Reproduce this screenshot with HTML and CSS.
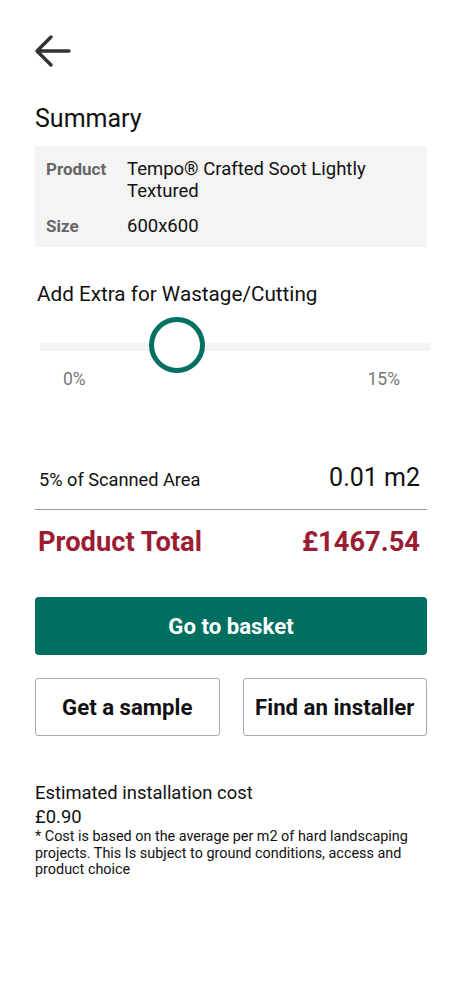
FILE: index.html
```html
<!DOCTYPE html>
<html lang="en">
<head>
    <meta charset="UTF-8">
    <meta name="viewport" content="width=device-width, initial-scale=1.0">
    <title>Summary</title>
    <link rel="stylesheet" href="styles.css">
</head>
<body>
    <div class="page">
        <button class="back" aria-label="Back">
            <svg width="38" height="36" viewBox="0 0 38 36">
                <path d="M35 17H3M17 3L3 17L17 31" fill="none" stroke="#333" stroke-width="3.4" stroke-linecap="round" stroke-linejoin="round"/>
            </svg>
        </button>

        <h1>Summary</h1>
        <div class="summary">
            <div class="row">
                <span class="label">Product</span>
                <span class="value">Tempo® Crafted Soot Lightly Textured</span>
            </div>
            <div class="row">
                <span class="label">Size</span>
                <span class="value">600x600</span>
            </div>
        </div>

        <h2>Add Extra for Wastage/Cutting</h2>
        <div class="slider">
            <div class="track"></div>
            <div class="thumb" style="left: 35%"></div>
        </div>
        <div class="ticks">
            <span>0%</span>
            <span>15%</span>
        </div>

        <div class="area">
            <span>5% of Scanned Area</span>
            <span class="area-value">0.01 m2</span>
        </div>
        <div class="total">
            <span>Product Total</span>
            <span>£1467.54</span>
        </div>

        <button class="primary">Go to basket</button>
        <div class="actions">
            <button class="secondary">Get a sample</button>
            <button class="secondary">Find an installer</button>
        </div>

        <div class="install">
            <p class="install-title">Estimated installation cost</p>
            <p class="install-price">£0.90</p>
            <p class="note">* Cost is based on the average per m2 of hard landscaping projects. This Is subject to ground conditions, access and product choice</p>
        </div>
    </div>
</body>
</html>
```

FILE: styles.css
```css
body {
    margin: 0;
    font-family: Roboto, "Noto Sans", sans-serif;
    color: #111;
    background: #fff;
}
.page {
    padding: 34px 35px 40px 35px;
}
.back {
    display: block;
    background: none;
    border: none;
    padding: 0;
    margin: 0 0 34px -1px;
    cursor: pointer;
}
.back svg {
    display: block;
}
h1 {
    font-size: 25px;
    font-weight: 400;
    margin: 0 0 12px 0;
    line-height: 30px;
}
.summary {
    background: #f4f4f4;
    padding: 12px 11px 10px 11px;
    display: flex;
    flex-direction: column;
    gap: 13px;
}
.row {
    display: flex;
}
.label {
    width: 81px;
    flex-shrink: 0;
    font-size: 17px;
    font-weight: 700;
    color: #666;
    line-height: 22px;
}
.value {
    font-size: 18.5px;
    line-height: 22px;
    padding-right: 30px;
}
h2 {
    font-size: 20.7px;
    font-weight: 400;
    margin: 34px 0 0 2px;
    line-height: 26px;
}
.slider {
    position: relative;
    height: 60px;
    margin: 10px 0 0 5px;
    width: 390px;
}
.track {
    position: absolute;
    left: 0;
    right: 0;
    top: 26px;
    height: 8px;
    background: #f4f4f4;
}
.thumb {
    position: absolute;
    top: 0;
    width: 46px;
    height: 46px;
    margin-left: -28px;
    border: 5px solid #017060;
    border-radius: 50%;
    background: #fff;
}
.ticks {
    display: flex;
    justify-content: space-between;
    padding: 0 27px 0 28px;
    font-size: 17.5px;
    color: #777;
    line-height: 20px;
    margin-top: -8px;
}
.area {
    display: flex;
    justify-content: space-between;
    align-items: baseline;
    margin-top: 74px;
    padding: 0 7px 0 4px;
    font-size: 18.2px;
}
.area-value {
    font-size: 25px;
}
.total {
    display: flex;
    justify-content: space-between;
    border-top: 1.5px solid #999;
    margin-top: 17px;
    padding: 15px 7px 0 3px;
    font-size: 27.3px;
    font-weight: 700;
    color: #9b1d33;
    line-height: 34px;
}
.primary {
    display: block;
    width: 100%;
    height: 58px;
    margin-top: 38px;
    background: #006f5f;
    color: #fff;
    border: none;
    border-radius: 4px;
    font-family: inherit;
    font-size: 22.2px;
    font-weight: 700;
    cursor: pointer;
}
.actions {
    display: flex;
    gap: 23px;
    margin-top: 23px;
}
.secondary {
    flex: 1;
    height: 58px;
    background: #fff;
    border: 1px solid #aaa;
    border-radius: 3px;
    font-family: inherit;
    font-size: 22.2px;
    font-weight: 700;
    color: #111;
    cursor: pointer;
}
.install {
    margin-top: 45px;
}
.install p {
    margin: 0;
}
.install-title,
.install-price {
    font-size: 18.4px;
    line-height: 24px;
}
.note {
    font-size: 14.4px;
    line-height: 16.5px;
}
```
